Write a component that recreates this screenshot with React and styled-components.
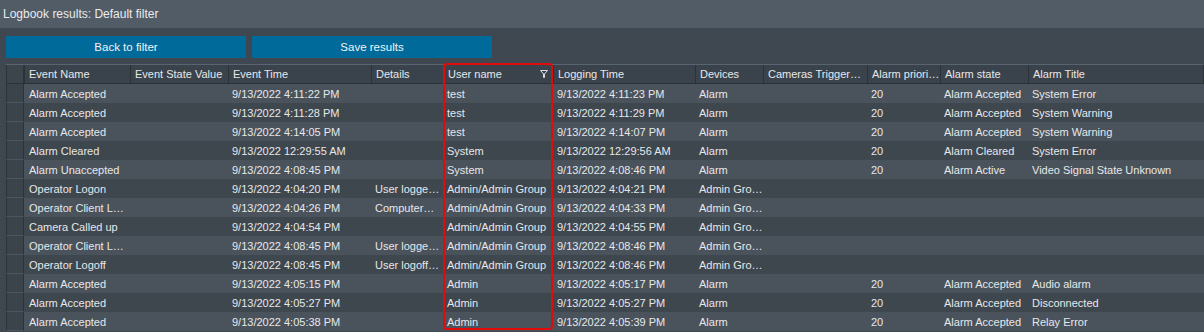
import React from "react";
import styled, { createGlobalStyle } from "styled-components";

const GlobalStyle = createGlobalStyle`
  body {
    margin: 0;
    background: #3f4851;
    font-family: "Liberation Sans", Arial, sans-serif;
    font-size: 11px;
    color: #e6e8ea;
    overflow: hidden;
  }
`;

const COLS = "18px 106px 98px 143px 72px 110px 142px 68px 104px 73px 88px 1fr";

const Page = styled.div`
  width: 1204px;
  height: 332px;
  overflow: hidden;
`;

const TitleBar = styled.div`
  height: 28px;
  background: #525c67;
  display: flex;
  align-items: center;
  padding-left: 3px;
  font-size: 12px;
  color: #e9ebed;
`;

const Toolbar = styled.div`
  display: flex;
  gap: 6px;
  padding: 8px 6px 6px;
`;

const Button = styled.button`
  width: 240px;
  height: 22px;
  border: none;
  background: #006a9b;
  color: #f2f4f6;
  font-family: inherit;
  font-size: 11.5px;
  padding: 0;
`;

const Table = styled.div`
  position: relative;
  margin-left: 6px;
`;

const HeaderRow = styled.div`
  display: grid;
  grid-template-columns: ${COLS};
  height: 19px;
  border-top: 1px solid #5a646e;
  background: #3a434b;
  border-right: 1px solid #2c3338;
`;

const HeaderCell = styled.div`
  position: relative;
  display: flex;
  align-items: center;
  padding-left: 4px;
  border-left: 1px solid #2c3338;
  border-bottom: 1px solid #2c3338;
  white-space: nowrap;
  overflow: hidden;
  &:first-child {
    border: 1px solid #2c3338;
    border-top: none;
    background: #3c444c;
  }
`;

const Row = styled.div`
  display: grid;
  grid-template-columns: ${COLS};
  height: 19px;
  background: ${(p) => (p.$odd ? "#4a535c" : "#3e464e")};
`;

const RowHead = styled.div`
  background: #3b434b;
  border-left: 1px solid #2c3338;
  border-right: 1px solid #2c3338;
  border-bottom: 1px solid #4d565f;
`;

const Cell = styled.div`
  display: flex;
  align-items: center;
  padding-left: ${(p) => (p.$first ? "5px" : "4px")};
  white-space: nowrap;
  overflow: hidden;
`;

const FilterIcon = styled.svg`
  position: absolute;
  right: 5px;
  top: 5px;
`;

const Highlight = styled.div`
  position: absolute;
  left: 437px;
  top: -1px;
  width: 110px;
  height: 267px;
  box-sizing: border-box;
  border: 2px solid #e20b0b;
  border-radius: 4px;
  pointer-events: none;
`;

const headers = [
  "Event Name",
  "Event State Value",
  "Event Time",
  "Details",
  "User name",
  "Logging Time",
  "Devices",
  "Cameras Trigger…",
  "Alarm priori…",
  "Alarm state",
  "Alarm Title",
];

const rows = [
  ["Alarm Accepted", "", "9/13/2022 4:11:22 PM", "", "test", "9/13/2022 4:11:23 PM", "Alarm", "", "20", "Alarm Accepted", "System Error"],
  ["Alarm Accepted", "", "9/13/2022 4:11:28 PM", "", "test", "9/13/2022 4:11:29 PM", "Alarm", "", "20", "Alarm Accepted", "System Warning"],
  ["Alarm Accepted", "", "9/13/2022 4:14:05 PM", "", "test", "9/13/2022 4:14:07 PM", "Alarm", "", "20", "Alarm Accepted", "System Warning"],
  ["Alarm Cleared", "", "9/13/2022 12:29:55 AM", "", "System", "9/13/2022 12:29:56 AM", "Alarm", "", "20", "Alarm Cleared", "System Error"],
  ["Alarm Unaccepted", "", "9/13/2022 4:08:45 PM", "", "System", "9/13/2022 4:08:46 PM", "Alarm", "", "20", "Alarm Active", "Video Signal State Unknown"],
  ["Operator Logon", "", "9/13/2022 4:04:20 PM", "User logge…", "Admin/Admin Group", "9/13/2022 4:04:21 PM", "Admin Gro…", "", "", "", ""],
  ["Operator Client L…", "", "9/13/2022 4:04:26 PM", "Computer…", "Admin/Admin Group", "9/13/2022 4:04:33 PM", "Admin Gro…", "", "", "", ""],
  ["Camera Called up", "", "9/13/2022 4:04:54 PM", "", "Admin/Admin Group", "9/13/2022 4:04:55 PM", "Admin Gro…", "", "", "", ""],
  ["Operator Client L…", "", "9/13/2022 4:08:45 PM", "User logge…", "Admin/Admin Group", "9/13/2022 4:08:46 PM", "Admin Gro…", "", "", "", ""],
  ["Operator Logoff", "", "9/13/2022 4:08:45 PM", "User logoff…", "Admin/Admin Group", "9/13/2022 4:08:46 PM", "Admin Gro…", "", "", "", ""],
  ["Alarm Accepted", "", "9/13/2022 4:05:15 PM", "", "Admin", "9/13/2022 4:05:17 PM", "Alarm", "", "20", "Alarm Accepted", "Audio alarm"],
  ["Alarm Accepted", "", "9/13/2022 4:05:27 PM", "", "Admin", "9/13/2022 4:05:27 PM", "Alarm", "", "20", "Alarm Accepted", "Disconnected"],
  ["Alarm Accepted", "", "9/13/2022 4:05:38 PM", "", "Admin", "9/13/2022 4:05:39 PM", "Alarm", "", "20", "Alarm Accepted", "Relay Error"],
];

export default function App() {
  return (
    <Page>
      <GlobalStyle />
      <TitleBar>Logbook results: Default filter</TitleBar>
      <Toolbar>
        <Button>Back to filter</Button>
        <Button>Save results</Button>
      </Toolbar>
      <Table>
        <HeaderRow>
          <HeaderCell />
          {headers.map((h) => (
            <HeaderCell key={h}>
              {h}
              {h === "User name" && (
                <FilterIcon width="8" height="8" viewBox="0 0 8 8">
                  <path d="M0.5 0.5 H7.5 L4.5 4 V7.5 H3.5 V4 Z" fill="none" stroke="#d8dcdf" strokeWidth="1" />
                </FilterIcon>
              )}
            </HeaderCell>
          ))}
        </HeaderRow>
        {rows.map((r, i) => (
          <Row key={i} $odd={i % 2 === 0}>
            <RowHead />
            {r.map((c, j) => (
              <Cell key={j} $first={j === 0}>{c}</Cell>
            ))}
          </Row>
        ))}
        <Highlight />
      </Table>
    </Page>
  );
}
